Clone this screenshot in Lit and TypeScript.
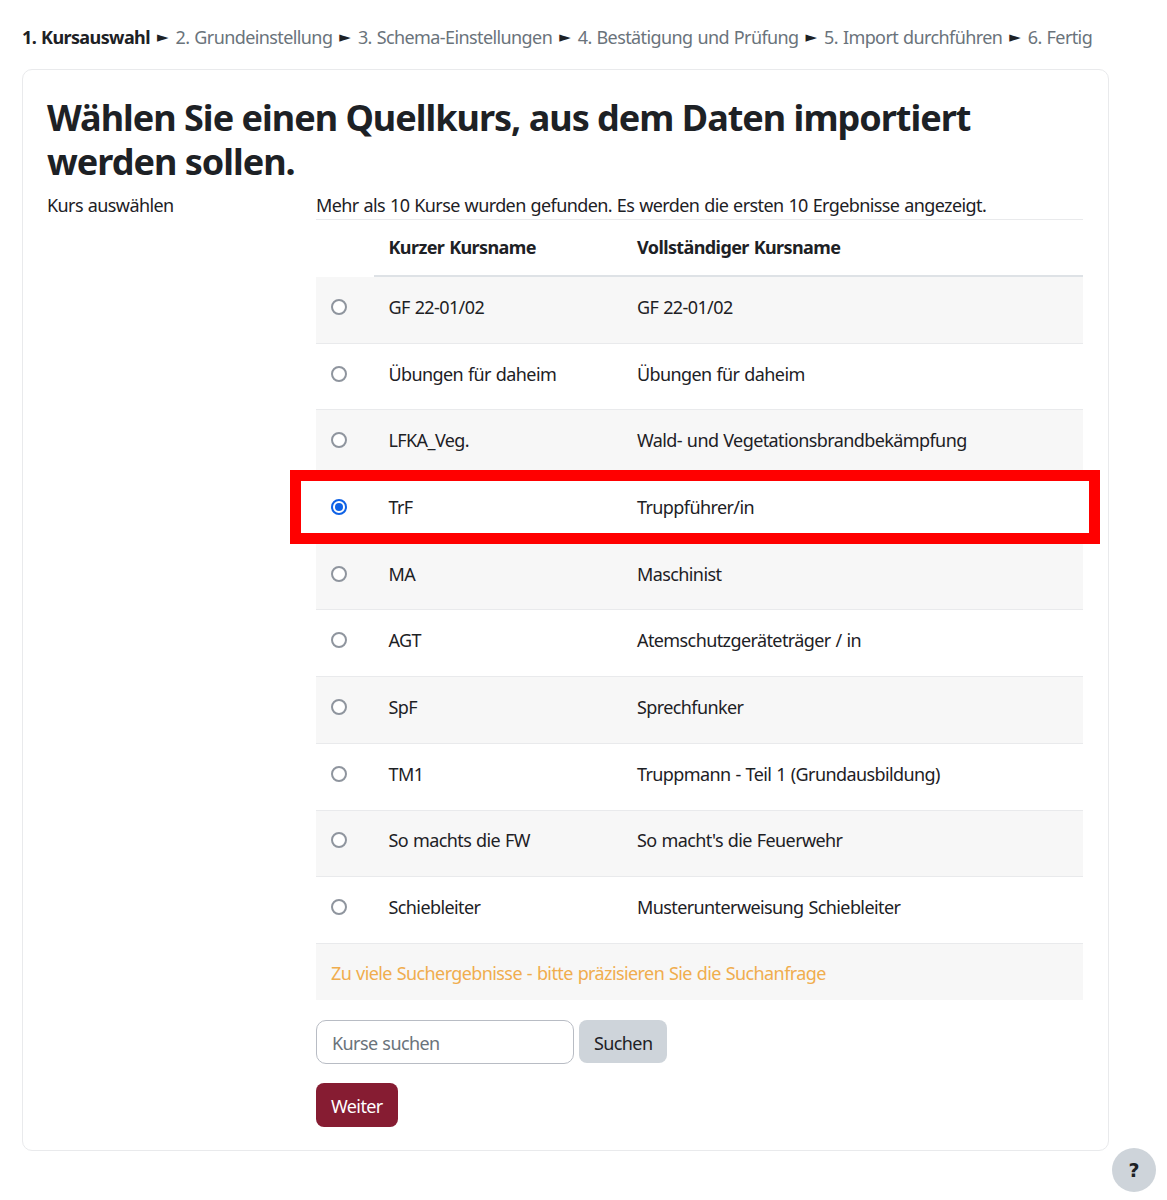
import { LitElement, html, css } from "lit";
import { customElement } from "lit/decorators.js";

const rows: [string, string][] = [
  ["GF 22-01/02", "GF 22-01/02"],
  ["Übungen für daheim", "Übungen für daheim"],
  ["LFKA_Veg.", "Wald- und Vegetationsbrandbekämpfung"],
  ["TrF", "Truppführer/in"],
  ["MA", "Maschinist"],
  ["AGT", "Atemschutzgeräteträger / in"],
  ["SpF", "Sprechfunker"],
  ["TM1", "Truppmann - Teil 1 (Grundausbildung)"],
  ["So machts die FW", "So macht's die Feuerwehr"],
  ["Schiebleiter", "Musterunterweisung Schiebleiter"],
];
const steps = ["2. Grundeinstellung", "3. Schema-Einstellungen", "4. Bestätigung und Prüfung", "5. Import durchführen", "6. Fertig"];

@customElement("app-root")
export class AppRoot extends LitElement {
  static styles = css`
    :host { display: block; height: 1200px; position: relative; overflow: hidden; background: #fff; color: #1d2125;
      font-family: "Noto Sans", "Open Sans", sans-serif; font-size: 18px; letter-spacing: -0.6px; word-spacing: 0.8px; }
    .page { padding: 24px 0 0 22px; width: 1087px; }
    .steps { display: flex; gap: 7px; align-items: center; height: 26px; margin-bottom: 19px; white-space: nowrap; color: #6a737b; }
    .steps b { color: #1d2125; font-weight: 700; }
    .arrow { color: #1d2125; font-size: 15px; letter-spacing: 0; word-spacing: 0; font-family: "DejaVu Sans", sans-serif; }
    .card { border: 1px solid #e9eaec; border-radius: 10px; padding: 26px 24px 23px; height: 1082px; box-sizing: border-box; }
    h1 { margin: 0 0 10px; font-size: 36px; line-height: 43.5px; font-weight: 700; letter-spacing: -1px; word-spacing: 0; }
    .form { display: grid; grid-template-columns: 269px 767px; }
    .label { line-height: 25px; }
    .intro { line-height: 25px; height: 26px; }
    .head { display: grid; grid-template-columns: 72.5px 248.5px 1fr; height: 58px; padding-bottom: 3px; border-top: 1px solid #e9eaec; box-sizing: border-box; align-items: center; font-weight: 700; }
    .head-wrap { position: relative; }
    .head-wrap::after { content: ""; position: absolute; left: 58px; right: 0; bottom: 0; height: 2px; background: #dee2e6; }
    .row { display: grid; grid-template-columns: 72.5px 248.5px 1fr; height: 66.7px; padding-bottom: 6px; box-sizing: border-box; align-items: center; border-bottom: 1px solid #e9eaec; position: relative; }
    .row.odd { background: #f7f7f7; }
    .radio { width: 16px; height: 16px; margin-left: 15px; border-radius: 50%; border: 2px solid #8f959e; background: #fff; box-sizing: border-box; }
    .radio.on { border-color: #0f62e6; display: flex; align-items: center; justify-content: center; }
    .radio.on::before { content: ""; width: 8px; height: 8px; border-radius: 50%; background: #0f62e6; }
    .mark { position: absolute; left: -26px; right: -17px; top: -7.5px; bottom: -1px; border: 11px solid #ff0000; pointer-events: none; }
    .more { height: 56px; padding-top: 2px; box-sizing: border-box; background: #f7f7f7; color: #f0ad4e; display: flex; align-items: center; padding-left: 15px; }
    .search { display: flex; gap: 5px; margin-top: 20px; align-items: center; }
    .input { width: 258px; height: 44px; box-sizing: border-box; border: 1px solid #b8bcc4; border-radius: 10px; padding: 2px 0 0 15px; display: flex; align-items: center; color: #6a737b; }
    .btn { height: 43px; border-radius: 8px; display: inline-flex; align-items: center; padding: 2px 15px 0; box-sizing: border-box; }
    .sec { background: #ced4da; color: #1d2125; }
    .pri { background: #861c32; color: #fff; margin-top: 19px; height: 44px; width: fit-content; }
    .help { position: absolute; left: 1112px; top: 1148px; width: 44px; height: 44px; border-radius: 50%; background: #ced4da; display: flex; align-items: center; justify-content: center; font-weight: 900; font-size: 19px; font-family: "DejaVu Sans", sans-serif; letter-spacing: 0; }
  `;

  render() {
    return html`
      <div class="page">
        <div class="steps">
          <b>1. Kursauswahl</b>
          ${steps.map((s) => html`<span class="arrow">►</span><span>${s}</span>`)}
        </div>
        <div class="card">
          <h1>Wählen Sie einen Quellkurs, aus dem Daten importiert werden sollen.</h1>
          <div class="form">
            <div class="label">Kurs auswählen</div>
            <div>
              <div class="intro">Mehr als 10 Kurse wurden gefunden. Es werden die ersten 10 Ergebnisse angezeigt.</div>
              <div class="head-wrap">
                <div class="head">
                  <span></span><span>Kurzer Kursname</span><span>Vollständiger Kursname</span>
                </div>
              </div>
              ${rows.map((r, i) => html`
                <div class="row ${i % 2 === 0 ? "odd" : ""}">
                  <div class="radio ${i === 3 ? "on" : ""}"></div>
                  <span>${r[0]}</span><span>${r[1]}</span>
                  ${i === 3 ? html`<div class="mark"></div>` : ""}
                </div>`)}
              <div class="more">Zu viele Suchergebnisse - bitte präzisieren Sie die Suchanfrage</div>
              <div class="search">
                <div class="input">Kurse suchen</div>
                <div class="btn sec">Suchen</div>
              </div>
              <div class="btn pri">Weiter</div>
            </div>
          </div>
        </div>
      </div>
      <div class="help">?</div>
    `;
  }
}
